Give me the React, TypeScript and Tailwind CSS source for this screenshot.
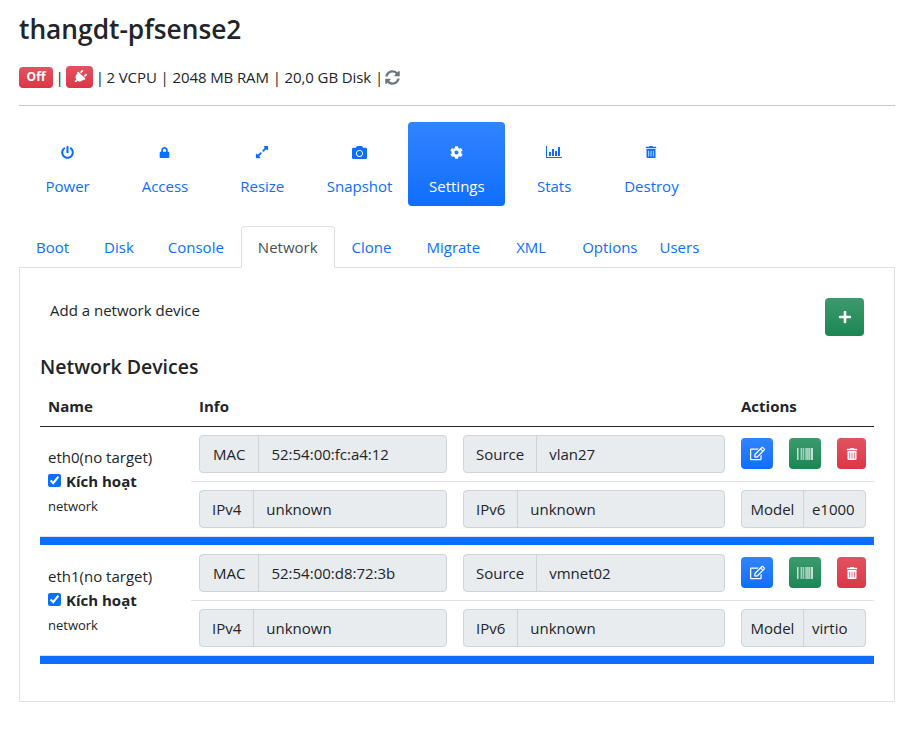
import { FaPowerOff, FaLock, FaExpandAlt, FaCamera, FaCog, FaTrashAlt, FaRegEdit, FaBarcode, FaPlus, FaPlug, FaSyncAlt } from 'react-icons/fa';

const font = { fontFamily: '"Open Sans", "Noto Sans", sans-serif' };

function ChartIcon() {
  return (
    <svg width="16" height="12" viewBox="0 0 16 12" fill="currentColor">
      <path d="M0 0h1v11h15v1H0z" />
      <rect x="3" y="6" width="2" height="4" />
      <rect x="6" y="3" width="2" height="7" />
      <rect x="9" y="5" width="2" height="5" />
      <rect x="12" y="1" width="2" height="9" />
    </svg>
  );
}

const pills = [
  { label: 'Power', icon: <FaPowerOff size={13} /> },
  { label: 'Access', icon: <FaLock size={11} /> },
  { label: 'Resize', icon: <FaExpandAlt size={14} /> },
  { label: 'Snapshot', icon: <FaCamera size={15} /> },
  { label: 'Settings', icon: <FaCog size={13} />, active: true },
  { label: 'Stats', icon: <ChartIcon /> },
  { label: 'Destroy', icon: <FaTrashAlt size={12} /> },
];

const tabs = [
  { label: 'Boot', cls: 'pl-4 pr-[17px]' },
  { label: 'Disk', cls: 'px-4' },
  { label: 'Console', cls: 'px-4' },
  { label: 'Network', cls: 'px-4', active: true },
  { label: 'Clone', cls: 'pl-4 pr-[17px]' },
  { label: 'Migrate', cls: 'pl-4 pr-[18px]' },
  { label: 'XML', cls: 'pl-4 pr-[18px]' },
  { label: 'Options', cls: 'pl-4 pr-[4px]' },
  { label: 'Users', cls: 'px-4' },
];

const devices = [
  { name: 'eth0(no target)', mac: '52:54:00:fc:a4:12', source: 'vlan27', model: 'e1000' },
  { name: 'eth1(no target)', mac: '52:54:00:d8:72:3b', source: 'vmnet02', model: 'virtio' },
];

function Group({ label, value, width, labelCls = 'px-3' }: { label: string; value: string; width: string; labelCls?: string }) {
  return (
    <div className={`flex h-[38px] ${width} rounded border border-[#ced4da] bg-[#e9ecef] text-[15px] text-[#212529]`}>
      <span className={`flex items-center border-r border-[#ced4da] ${labelCls}`}>{label}</span>
      <span className="flex items-center px-3">{value}</span>
    </div>
  );
}

function ActionButton({ color, w, children }: { color: string; w: string; children: React.ReactNode }) {
  return (
    <button className={`flex h-[31px] ${w} items-center justify-center rounded text-white ${color}`}>
      {children}
    </button>
  );
}

function DeviceRow({ d }: { d: (typeof devices)[number] }) {
  return (
    <div>
      <div className="flex">
        <div className="flex w-[151px] flex-col justify-center pb-[3px] pl-2 text-[15px] text-[#212529]">
          <div className="leading-6">{d.name}</div>
          <label className="flex items-center gap-[5px] font-bold leading-6">
            <input type="checkbox" checked readOnly className="h-[13px] w-[13px] accent-[#0d6efd]" />
            Kích hoạt
          </label>
          <div className="mt-[3px] text-[13px] leading-5">network</div>
        </div>
        <div className="flex-1">
          <div className="flex items-center gap-4 border-b border-[#dee2e6] py-2 pl-2">
            <Group label="MAC" value={d.mac} width="w-[248px]" labelCls="px-[13px]" />
            <Group label="Source" value={d.source} width="w-[262px]" />
            <div className="mt-[3px] flex gap-[16px] self-start">
              <ActionButton w="w-[32px]" color="bg-gradient-to-b from-[#3184fd] to-[#0d6efd]">
                <FaRegEdit size={15} />
              </ActionButton>
              <ActionButton w="w-[32px]" color="bg-gradient-to-b from-[#3c9a6e] to-[#198754]">
                <FaBarcode size={16} />
              </ActionButton>
              <ActionButton w="w-[29px]" color="bg-gradient-to-b from-[#e15361] to-[#dc3545]">
                <FaTrashAlt size={12} />
              </ActionButton>
            </div>
          </div>
          <div className="flex items-center gap-4 py-2 pl-2">
            <Group label="IPv4" value="unknown" width="w-[248px]" />
            <Group label="IPv6" value="unknown" width="w-[262px]" />
            <div className="flex h-[38px] w-[125px] rounded border border-[#ced4da] bg-[#e9ecef] text-[15px] text-[#212529]">
              <span className="flex items-center border-r border-[#ced4da] px-[8.5px]">Model</span>
              <span className="flex items-center px-[8px]">{d.model}</span>
            </div>
          </div>
        </div>
      </div>
      <div className="h-[9px] border-t border-[#dee2e6] bg-[#0d6efd]" />
    </div>
  );
}

export default function App() {
  return (
    <div className="min-h-[736px] bg-white pl-[19px] pr-[14px] text-[#212529]" style={font}>
      <h3 className="pt-[11px] text-[26.3px] font-semibold leading-[36px]">thangdt-pfsense2</h3>

      <div className="mt-[18px] flex h-6 items-center text-[15px]">
        <span className="flex h-[21px] w-[34px] items-center justify-center rounded bg-gradient-to-b from-[#e15361] to-[#dc3545] text-[12px] font-bold text-white">
          Off
        </span>
        <span className="mx-[2.5px]">|</span>
        <span className="flex h-[22px] w-[27px] items-center justify-center rounded bg-gradient-to-b from-[#e15361] to-[#dc3545] text-white">
          <FaPlug size={14} className="rotate-45" />
        </span>
        <span className="mx-[2.5px]">|</span>
        <span className="tracking-[-0.1px]">2 VCPU | 2048 MB RAM | 20,0 GB Disk |</span>
        <FaSyncAlt size={15} className="ml-[2px] text-[#6c757d]" />
      </div>

      <hr className="mt-[16px] border-[#c8c8c8]" />

      <div className="mt-4 flex">
        {pills.map((p) => (
          <a
            key={p.label}
            className={`flex h-[84px] w-[97.3px] flex-col items-center rounded text-[15px] ${
              p.active ? 'bg-gradient-to-b from-[#3184fd] to-[#0d6efd] text-white' : 'text-[#0d6efd]'
            }`}
          >
            <span className="mt-[22px] flex h-4 items-center">{p.icon}</span>
            <span className="mt-[14px] leading-6">{p.label}</span>
          </a>
        ))}
      </div>

      <div className="relative mt-5 flex">
        {tabs.map((t) => (
          <a
            key={t.label}
            className={`flex h-[42px] items-center rounded-t border text-[15px] ${t.cls} ${
              t.active
                ? 'relative z-10 border-[#dee2e6] border-b-white bg-white text-[#495057]'
                : 'border-transparent text-[#0d6efd]'
            }`}
          >
            {t.label}
          </a>
        ))}
      </div>

      <div className="-mt-px h-[435px] border border-[#dee2e6] px-5 pt-[30px]">
        <div className="flex items-start justify-between pr-[10px]">
          <div className="pl-[10px] text-[15px] leading-6">Add a network device</div>
          <button className="flex h-[38px] w-[39px] items-center justify-center rounded bg-gradient-to-b from-[#3c9a6e] to-[#198754] text-white">
            <FaPlus size={14} />
          </button>
        </div>

        <h5 className="mt-[19px] text-[19.5px] font-semibold leading-6">Network Devices</h5>

        <div className="mt-[15px] flex h-[33px] items-start border-b border-[#212529] text-[15px] font-bold leading-6">
          <div className="w-[159px] pl-2">Name</div>
          <div className="w-[542px]">Info</div>
          <div>Actions</div>
        </div>

        <div className="flex flex-col gap-px">
          {devices.map((d) => (
            <DeviceRow key={d.name} d={d} />
          ))}
        </div>
      </div>
    </div>
  );
}
